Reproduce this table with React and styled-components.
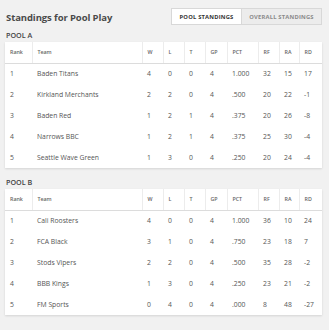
import React from "react";
import styled, { createGlobalStyle } from "styled-components";

const GlobalStyle = createGlobalStyle`
  body { margin: 0; padding: 0; background: #f1f1f1; }
  * { box-sizing: border-box; }
`;

const Page = styled.div`
  width: 329px; height: 330px; padding: 8px 7px 0 5px;
  font-family: "Open Sans", "Liberation Sans", sans-serif; color: #555;
`;

const TopBar = styled.div`
  display: flex; justify-content: space-between; align-items: center;
  height: 17px; padding-left: 1px;
`;

const Title = styled.h1`
  margin: 1px 0 0; font-size: 9.5px; font-weight: 700; color: #4a4a4a; letter-spacing: -0.1px;
`;

const Toggle = styled.div`
  display: flex; height: 17px; border: 1px solid #d8d8d8; background: #ececec;
`;

const ToggleButton = styled.div`
  display: flex; align-items: center; justify-content: center;
  width: ${(p) => p.$w}px; font-size: 5.8px; font-weight: 700; letter-spacing: 0.2px;
  color: ${(p) => (p.$active ? "#333" : "#8a8a8a")};
  background: ${(p) => (p.$active ? "#fff" : "#ececec")};
  border-right: ${(p) => (p.$active ? "1px solid #d8d8d8" : "none")};
`;

const PoolLabel = styled.div`
  font-size: 7.2px; font-weight: 600; color: #444; height: 15px;
  display: flex; align-items: center; padding-left: 1px;
  margin-top: ${(p) => p.$top}px;
`;

const Table = styled.table`
  width: 317px; border-collapse: collapse; table-layout: fixed; background: #fff;
  box-shadow: 0 1px 2px rgba(0, 0, 0, 0.12);
`;

const Th = styled.th`
  height: 21px; padding: 0 0 0 5px; text-align: left; font-size: 5.3px; font-weight: 600;
  color: #666; border-right: 1px solid #ececec; border-bottom: 1px solid #dcdcdc;
  &:last-child { border-right: none; }
`;

const Td = styled.td`
  height: 21px; padding: 0 0 0 5px; font-size: 6.8px; color: #555; white-space: nowrap;
`;

const cols = [27, 110, 21, 21, 21, 22, 31, 21, 20, 23];
const heads = ["Rank", "Team", "W", "L", "T", "GP", "PCT", "RF", "RA", "RD"];

const poolA = [
  [1, "Baden Titans", 4, 0, 0, 4, "1.000", 32, 15, 17],
  [2, "Kirkland Merchants", 2, 2, 0, 4, ".500", 20, 22, -1],
  [3, "Baden Red", 1, 2, 1, 4, ".375", 20, 26, -8],
  [4, "Narrows BBC", 1, 2, 1, 4, ".375", 25, 30, -4],
  [5, "Seattle Wave Green", 1, 3, 0, 4, ".250", 20, 24, -4],
];

const poolB = [
  [1, "Cali Roosters", 4, 0, 0, 4, "1.000", 36, 10, 24],
  [2, "FCA Black", 3, 1, 0, 4, ".750", 23, 18, 7],
  [3, "Stods Vipers", 2, 2, 0, 4, ".500", 35, 28, -2],
  [4, "BBB Kings", 1, 3, 0, 4, ".250", 23, 21, -2],
  [5, "FM Sports", 0, 4, 0, 4, ".000", 8, 48, -27],
];

function Standings({ rows }) {
  return (
    <Table>
      <colgroup>
        {cols.map((w, i) => (
          <col key={i} style={{ width: w }} />
        ))}
      </colgroup>
      <thead>
        <tr>
          {heads.map((h) => (
            <Th key={h}>{h}</Th>
          ))}
        </tr>
      </thead>
      <tbody>
        {rows.map((r) => (
          <tr key={r[0]}>
            {r.map((v, i) => (
              <Td key={i}>{v}</Td>
            ))}
          </tr>
        ))}
      </tbody>
    </Table>
  );
}

export default function App() {
  return (
    <Page>
      <GlobalStyle />
      <TopBar>
        <Title>Standings for Pool Play</Title>
        <Toggle>
          <ToggleButton $active $w={70}>POOL STANDINGS</ToggleButton>
          <ToggleButton $w={79}>OVERALL STANDINGS</ToggleButton>
        </Toggle>
      </TopBar>
      <PoolLabel $top={2}>POOL A</PoolLabel>
      <Standings rows={poolA} />
      <PoolLabel $top={6}>POOL B</PoolLabel>
      <Standings rows={poolB} />
    </Page>
  );
}
